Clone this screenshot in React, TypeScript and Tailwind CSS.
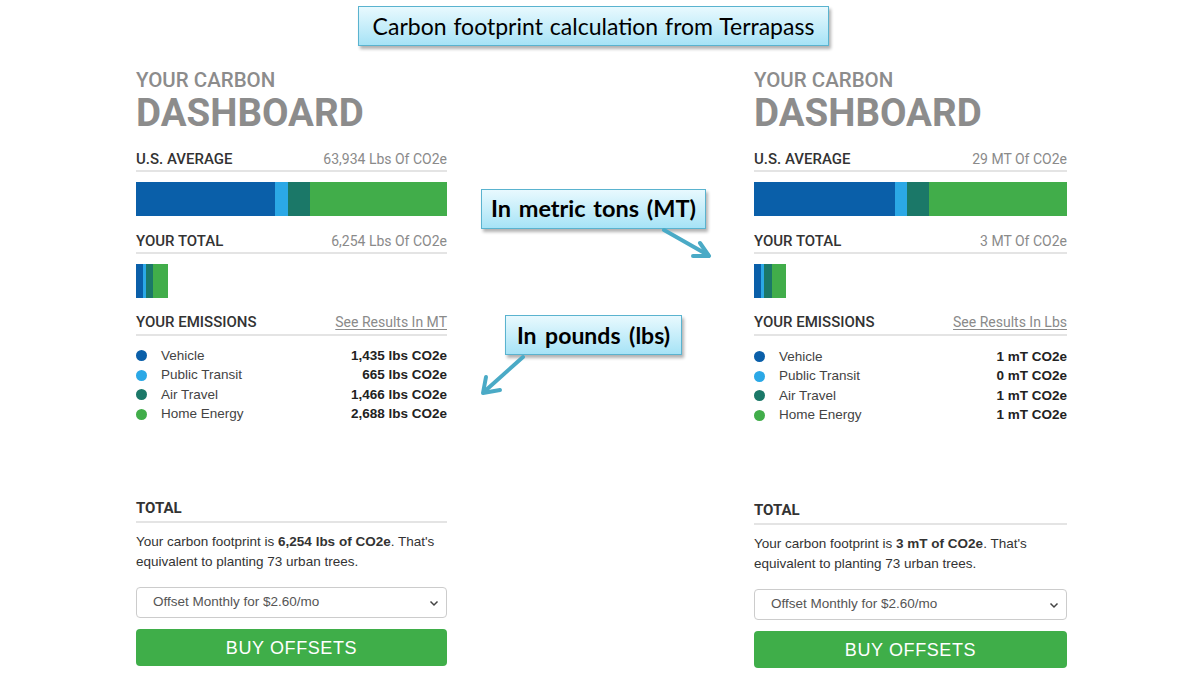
import React from "react";

type Seg = { color: string; w: number };

const C = {
  dark: "#0a5fa9",
  light: "#2ba8e6",
  teal: "#1b7868",
  green: "#41ad4a",
};

function HeaderRow({
  left,
  right,
  mt,
  pb,
  link,
  bold,
}: {
  left: string;
  right?: string;
  mt: string;
  pb: string;
  link?: boolean;
  bold?: boolean;
}) {
  return (
    <div className={`flex items-baseline justify-between border-b-2 border-[#e4e4e4] ${mt} ${pb}`}>
      <span
        className={`text-[15px] leading-[20px] text-[#333333] ${bold ? "font-bold" : "font-medium"}`}
        style={{ fontFamily: "Roboto, sans-serif" }}
      >
        {left}
      </span>
      {right && (
        <span
          className={`text-[14px] leading-[20px] text-[#8a8a8a] ${link ? "underline underline-offset-2" : ""}`}
          style={{ fontFamily: "Roboto, sans-serif" }}
        >
          {right}
        </span>
      )}
    </div>
  );
}

function Bar({ segs, className }: { segs: Seg[]; className: string }) {
  return (
    <div className={`flex h-[34px] ${className}`}>
      {segs.map((s, i) => (
        <div key={i} style={{ width: s.w, backgroundColor: s.color }} className="h-full" />
      ))}
    </div>
  );
}

type PanelProps = {
  width: string;
  avg: string;
  total: string;
  link: string;
  values: string[];
  footprint: string;
  bigBar: Seg[];
  smallBar: Seg[];
  pt: string;
  listMt: string;
  totalMt: string;
};

function Panel(p: PanelProps) {
  const items = [
    { name: "Vehicle", color: C.dark },
    { name: "Public Transit", color: C.light },
    { name: "Air Travel", color: C.teal },
    { name: "Home Energy", color: C.green },
  ];
  return (
    <div className={`flex flex-col ${p.width} ${p.pt}`}>
      <div
        className="text-[20.5px] leading-[23px] font-medium text-[#8c8c8c]"
        style={{ fontFamily: "Roboto, sans-serif" }}
      >
        YOUR CARBON
      </div>
      <div
        className="mt-[2px] text-[38.5px] leading-[38px] font-bold text-[#8c8c8c]"
        style={{ fontFamily: "Roboto, sans-serif" }}
      >
        DASHBOARD
      </div>

      <HeaderRow left="U.S. AVERAGE" right={p.avg} mt="mt-[17px]" pb="pb-[1px]" />
      <Bar segs={p.bigBar} className="mt-[10px]" />

      <HeaderRow left="YOUR TOTAL" right={p.total} mt="mt-[15px]" pb="pb-[1px]" />
      <Bar segs={p.smallBar} className="mt-[10px]" />

      <HeaderRow left="YOUR EMISSIONS" right={p.link} mt="mt-[14px]" pb="pb-[2px]" link />

      <ul
        className={`flex flex-col ${p.listMt}`}
        style={{ fontFamily: '"Liberation Sans", Arial, sans-serif' }}
      >
        {items.map((it, i) => (
          <li key={it.name} className="flex items-center h-[19.5px] text-[13.5px]">
            <span className="w-[11px] h-[11px] rounded-full" style={{ backgroundColor: it.color }} />
            <span className="ml-[14px] text-[#444444]">{it.name}</span>
            <span className="ml-auto font-bold text-[#222222]">{p.values[i]}</span>
          </li>
        ))}
      </ul>

      <div className={p.totalMt}>
        <HeaderRow left="TOTAL" mt="mt-0" pb="pb-[3px]" bold />
      </div>

      <p
        className="mt-[9px] text-[13.5px] leading-[19.5px] text-[#333333]"
        style={{ fontFamily: '"Liberation Sans", Arial, sans-serif' }}
      >
        Your carbon footprint is <b className="font-bold">{p.footprint}</b>. That's equivalent to planting 73
        urban trees.
      </p>

      <div
        className="mt-[16px] h-[31px] flex items-center justify-between rounded-[4px] border border-[#cccccc] pl-[16px] pr-[7px] text-[13.5px] text-[#555555]"
        style={{ fontFamily: '"Liberation Sans", Arial, sans-serif' }}
      >
        <span>Offset Monthly for $2.60/mo</span>
        <svg width="10" height="10" viewBox="0 0 10 10">
          <path d="M1.5 3.5 L5 7 L8.5 3.5" fill="none" stroke="#444" strokeWidth="1.5" />
        </svg>
      </div>

      <button
        className="mt-[11px] h-[37px] rounded-[4px] bg-[#3fae49] text-white text-[18px] tracking-[0.6px] pt-[2px]"
        style={{ fontFamily: '"Liberation Sans", Arial, sans-serif' }}
      >
        BUY OFFSETS
      </button>
    </div>
  );
}

function Callout({ text, className, bold, size }: { text: string; className: string; bold?: boolean; size: string }) {
  return (
    <div
      className={`absolute flex items-center justify-center border border-[#5ab3cf] bg-gradient-to-b from-[#e8f9fe] to-[#a6e3f6] shadow-[2px_3px_3px_rgba(0,0,0,0.3)] text-black ${size} ${bold ? "font-bold" : ""} ${className}`}
      style={{ fontFamily: 'Lato, "Open Sans", sans-serif' }}
    >
      {text}
    </div>
  );
}

export default function App() {
  return (
    <div className="relative w-[1200px] h-[674px] bg-white overflow-hidden">
      <div className="flex pl-[136px] gap-[307px]">
        <Panel
          width="w-[311px]"
          pt="pt-[69px]"
          avg="63,934 Lbs Of CO2e"
          total="6,254 Lbs Of CO2e"
          link="See Results In MT"
          values={["1,435 lbs CO2e", "665 lbs CO2e", "1,466 lbs CO2e", "2,688 lbs CO2e"]}
          footprint="6,254 lbs of CO2e"
          bigBar={[
            { color: C.dark, w: 139 },
            { color: C.light, w: 13 },
            { color: C.teal, w: 22 },
            { color: C.green, w: 137 },
          ]}
          smallBar={[
            { color: C.dark, w: 7 },
            { color: C.light, w: 3 },
            { color: C.teal, w: 7 },
            { color: C.green, w: 15 },
          ]}
          listMt="mt-[10px]"
          totalMt="mt-[74px]"
        />
        <Panel
          width="w-[313px]"
          pt="pt-[69px]"
          avg="29 MT Of CO2e"
          total="3 MT Of CO2e"
          link="See Results In Lbs"
          values={["1 mT CO2e", "0 mT CO2e", "1 mT CO2e", "1 mT CO2e"]}
          footprint="3 mT of CO2e"
          bigBar={[
            { color: C.dark, w: 141 },
            { color: C.light, w: 12 },
            { color: C.teal, w: 22 },
            { color: C.green, w: 138 },
          ]}
          smallBar={[
            { color: C.dark, w: 7 },
            { color: C.light, w: 3 },
            { color: C.teal, w: 8 },
            { color: C.green, w: 14 },
          ]}
          listMt="mt-[11px]"
          totalMt="mt-[75px]"
        />
      </div>

      <Callout
        text="Carbon footprint calculation from Terrapass"
        className="left-[358px] top-[6px] w-[471px] h-[40px] [word-spacing:1px]"
        size="text-[23px]"
      />
      <Callout
        text="In metric tons (MT)"
        className="left-[481px] top-[189px] w-[225px] h-[40px] [word-spacing:2px]"
        size="text-[23.5px]"
        bold
      />
      <Callout
        text="In pounds (lbs)"
        className="left-[505px] top-[315px] w-[177px] h-[40px] [word-spacing:3px]"
        size="text-[23px]"
        bold
      />

      <svg className="absolute inset-0 pointer-events-none" width="1200" height="674">
        <g fill="none" stroke="#4aaac6" strokeWidth="4" strokeLinecap="round" strokeLinejoin="round">
          <line x1="664" y1="230" x2="708" y2="255" />
          <polyline points="700,243 709,256 693,256" />
          <line x1="523" y1="357" x2="485" y2="391" />
          <polyline points="486,377 483,393 500,390" />
        </g>
      </svg>
    </div>
  );
}
